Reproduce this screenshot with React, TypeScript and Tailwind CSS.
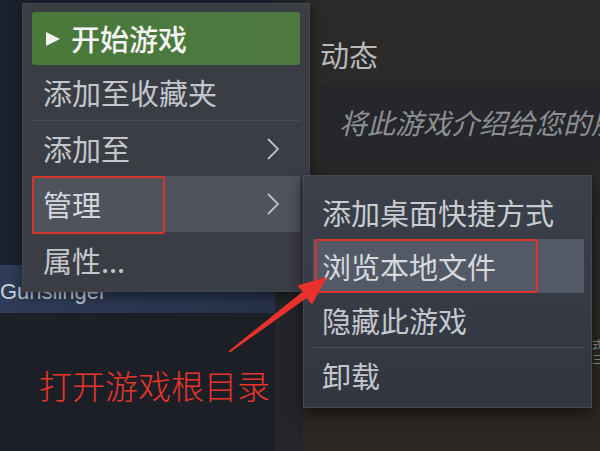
import React from "react";

const cjk = { fontFamily: '"Noto Sans CJK SC", "Noto Sans", sans-serif' };

function Chevron() {
  return (
    <svg width="14" height="24" viewBox="0 0 14 24" className="shrink-0">
      <path d="M2 2 L12 12 L2 22" fill="none" stroke="#b9bdc4" strokeWidth="1.8" />
    </svg>
  );
}

export default function App() {
  return (
    <div className="relative w-[600px] h-[451px] overflow-hidden bg-[#1c1f27]" style={cjk}>
      {/* background page */}
      <div className="flex w-full h-full">
        <div className="w-[275px] shrink-0 flex flex-col">
          <div className="h-[265px] bg-[#1c2130]" />
          <div className="h-[48px] bg-gradient-to-r from-[#2f3d58] to-[#27324a] flex items-center">
            <span className="text-[22px] text-[#c9d0dc] pt-[4px]" style={{ fontFamily: '"Liberation Sans", sans-serif' }}>
              Gunslinger
            </span>
          </div>
          <div className="flex-1 bg-[#1c1f26] pt-[56px] pl-[39px]">
            <span className="text-[33px] font-light text-[#e8352c] leading-none whitespace-nowrap">打开游戏根目录</span>
          </div>
        </div>
        <div className="w-[28px] shrink-0 bg-[#24252a]" />
        <div className="flex-1 min-w-0 overflow-hidden bg-gradient-to-b from-[#2c2b2a] via-[#2a2826] to-[#2b2723] pl-[17px] pt-[40px]">
          <div className="text-[29px] text-[#b9babc] leading-none">动态</div>
          <div className="mt-[17px] h-[77px] bg-[#26272a] pl-[19px] pt-[22px] overflow-hidden">
            <span className="text-[28px] italic text-[#8d8f93] whitespace-nowrap leading-none">将此游戏介绍给您的朋友</span>
          </div>
          <div className="mt-[174px] ml-[272px] text-[11px] text-[#9a9a9a] leading-[15px]">式<br />三</div>
        </div>
      </div>

      {/* main context menu */}
      <div className="absolute left-[22px] top-[3px] w-[288px] h-[289px] bg-[#3b3d44] border border-[#45474e] shadow-[0_4px_12px_rgba(0,0,0,0.5)] pt-[8px] px-[9px] flex flex-col">
        <div className="h-[53px] rounded-[3px] bg-gradient-to-r from-[#4a793b] to-[#4d7940] flex items-center pl-[13px] gap-[10px]">
          <svg width="16" height="16" viewBox="0 0 16 16"><path d="M1 1 L15 8 L1 15 Z" fill="#f2f2f2" /></svg>
          <span className="text-[29px] font-medium text-[#f4f4f4] leading-none">开始游戏</span>
        </div>
        <div className="h-[55px] flex items-center pl-[11px]">
          <span className="text-[29px] text-[#c3c7cd] leading-none">添加至收藏夹</span>
        </div>
        <div className="h-px bg-[#4a4c53]" />
        <div className="h-[55px] flex items-center justify-between pl-[11px] pr-[20px]">
          <span className="text-[29px] text-[#c3c7cd] leading-none">添加至</span>
          <Chevron />
        </div>
        <div className="relative h-[56px] bg-[#4e535c] flex items-center justify-between pl-[11px] pr-[20px]">
          <span className="text-[29px] text-[#d4d7dc] leading-none">管理</span>
          <Chevron />
          <div className="absolute left-0 top-0 w-[133px] h-[58px] border-2 border-[#d8352d] rounded-[2px]" />
        </div>
        <div className="h-[56px] flex items-center pl-[11px]">
          <span className="text-[29px] text-[#c3c7cd] leading-none">属性...</span>
        </div>
      </div>

      {/* submenu */}
      <div className="absolute left-[303px] top-[175px] w-[289px] h-[233px] bg-gradient-to-b from-[#3b404a] to-[#313641] border border-[#454a54] shadow-[0_6px_14px_rgba(0,0,0,0.55)] pt-[9px] pl-[9px] pr-[7px] flex flex-col">
        <div className="h-[54px] flex items-center pl-[9px]">
          <span className="text-[29px] text-[#c9ccd1] leading-none whitespace-nowrap">添加桌面快捷方式</span>
        </div>
        <div className="relative h-[54px] bg-[#535966] flex items-center pl-[9px]">
          <span className="text-[29px] text-[#d6d9de] leading-none whitespace-nowrap">浏览本地文件</span>
          <div className="absolute left-[2px] top-0 w-[223px] h-[54px] border-2 border-[#d8352d] rounded-[2px]" />
        </div>
        <div className="h-[54px] flex items-center pl-[9px]">
          <span className="text-[29px] text-[#c3c7cd] leading-none whitespace-nowrap">隐藏此游戏</span>
        </div>
        <div className="h-px bg-[#4a4f59]" />
        <div className="h-[54px] flex items-center pl-[9px]">
          <span className="text-[29px] text-[#c3c7cd] leading-none">卸载</span>
        </div>
      </div>

      {/* red annotation arrow */}
      <svg className="absolute left-0 top-0 pointer-events-none" width="600" height="451" viewBox="0 0 600 451">
        <polygon
          points="327,277 312,304.5 306.5,298 229.6,352.8 228.4,351.2 302.8,291.5 297.4,285.5"
          fill="#e8322b"
        />
      </svg>
    </div>
  );
}
